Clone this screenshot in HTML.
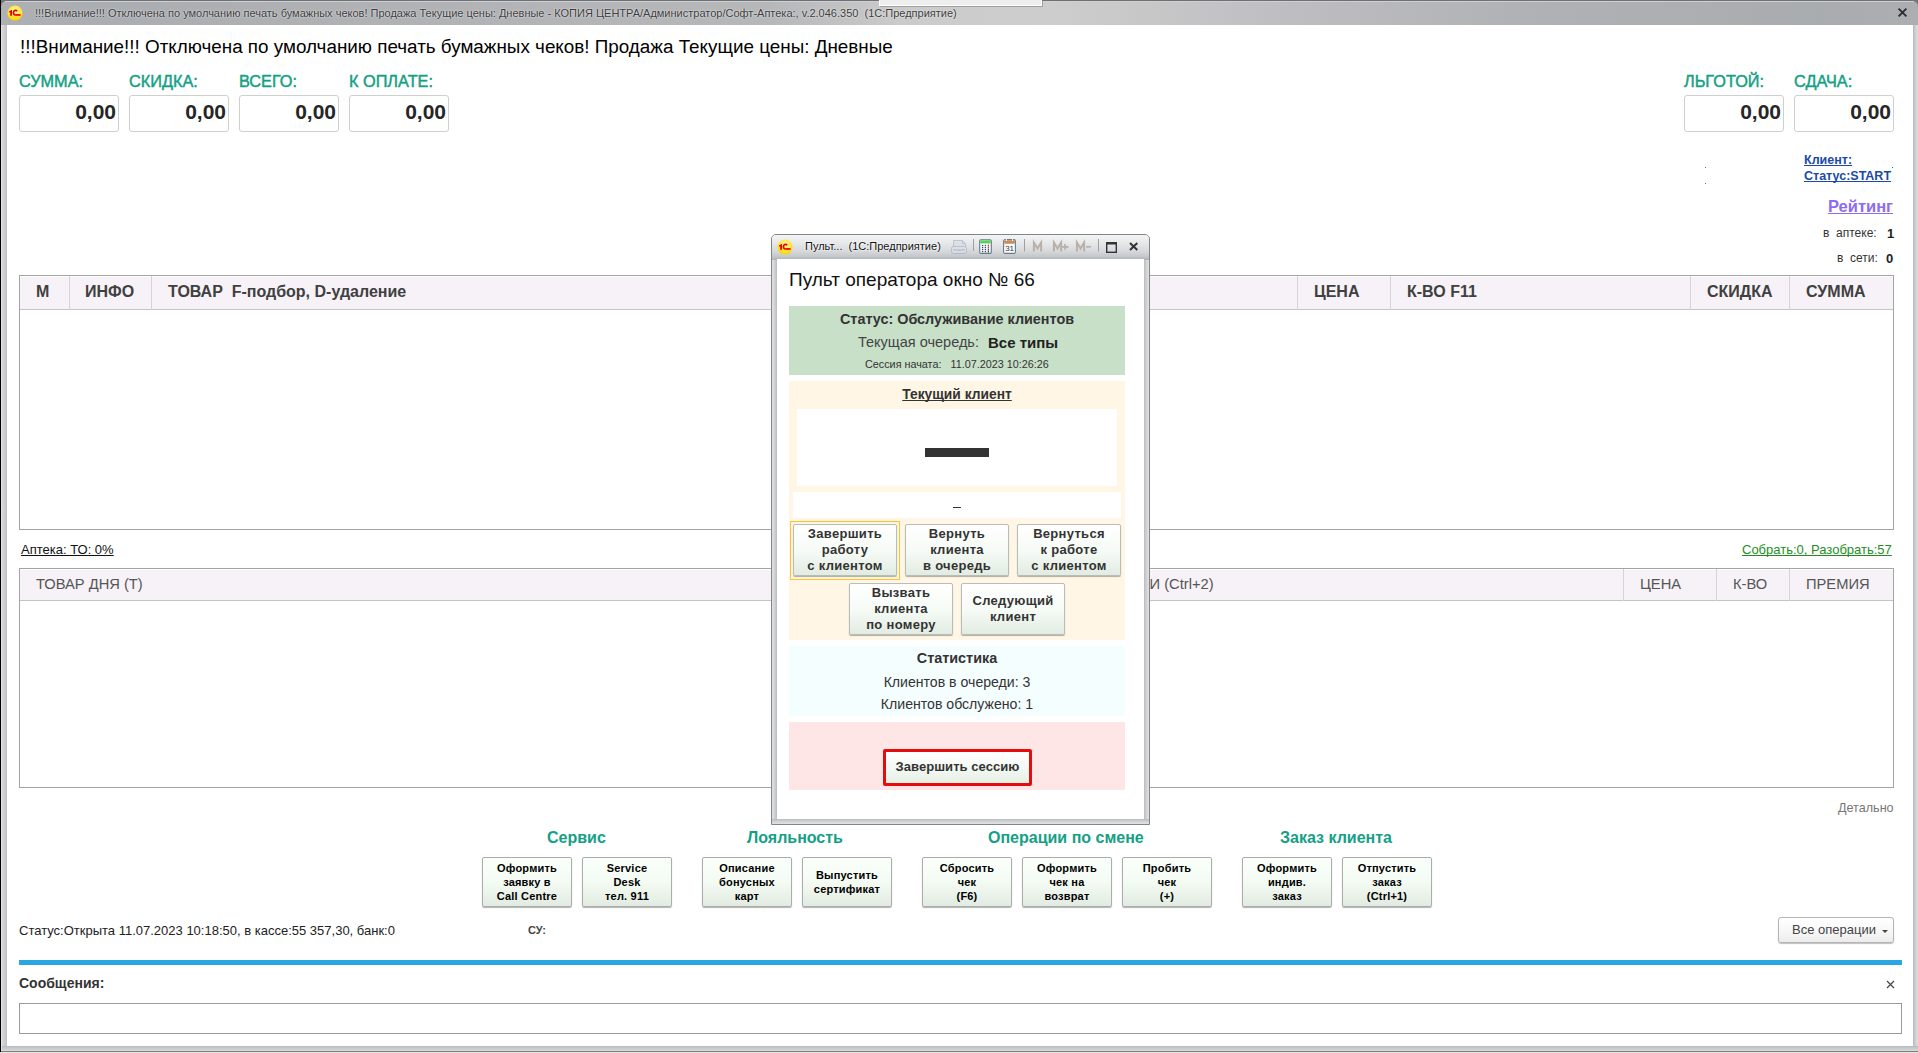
<!DOCTYPE html>
<html><head><meta charset="utf-8">
<style>
*{margin:0;padding:0;box-sizing:border-box}
html,body{width:1918px;height:1053px;overflow:hidden;background:#e8e6e0;font-family:"Liberation Sans",sans-serif}
.a{position:absolute;white-space:nowrap;text-decoration-skip-ink:none}
#frame{position:absolute;left:1px;top:0;width:1917px;height:1052px;background:#c5c8cc;border-bottom:1px solid #7e7e80}
#frame:after{content:"";position:absolute;left:0;top:0;width:1px;height:1051px;background:#e2e2e4}
#blk{position:absolute;left:0;top:0;width:1px;height:1052px;background:#000}
#tb{position:absolute;left:1px;top:0;width:1917px;height:25px;background:linear-gradient(90deg,#aeb0b4 0%,#aaadb1 5%,#b2b3b6 25%,#b6b7b9 40%,#cbcbcb 47%,#cdcdcd 55%,#bdbdc0 68%,#b0b1b4 80%,#a9acae 95%,#adaeb2 100%);border-top:1px solid #707072;border-radius:6px 6px 0 0}
#tb:before{content:"";position:absolute;left:4px;top:0;right:4px;height:1px;background:#cdd0d4}
#content{position:absolute;left:7px;top:25px;width:1906px;height:1021px;background:#fff}
.ttl{font-size:11px;color:#3c3c3c;text-shadow:0 0 2px #fff}
.h1{font-size:18.85px;color:#000}
.lbl{font-size:16.3px;color:#14a085;-webkit-text-stroke:.45px #14a085}
.num{position:absolute;width:100px;height:37px;border:1px solid #cfcfcf;border-radius:3px;background:#fff;font-size:21px;font-weight:bold;color:#262626;text-align:right;padding-right:2px;line-height:31px}
.th{position:absolute;top:0;height:34px;line-height:34px;font-size:16px;font-weight:bold;color:#333;border-right:1px solid #d8d8d8;background:#f5f2f5}
.th2{position:absolute;top:0;height:32px;line-height:32px;font-size:14px;color:#555;border-right:1px solid #d8d8d8;background:#f5f2f5}
.grp{font-size:16px;font-weight:bold;color:#14a085}
.btn{position:absolute;top:857px;width:90px;height:50px;border:1px solid #aaaeaa;border-radius:2px;background:linear-gradient(#fbfffb,#f3fbf3 50%,#e2ebe2);box-shadow:0 1px 1px rgba(0,0,0,.3);font-size:11px;font-weight:bold;color:#000;letter-spacing:.2px;text-align:center;line-height:14px;display:flex;align-items:center;justify-content:center}
.dbtn{position:absolute;width:104px;height:52px;border:1px solid #b9bcb9;border-radius:2px;background:linear-gradient(#ffffff,#f6fbf6 50%,#e2ece2);box-shadow:0 1px 1px rgba(0,0,0,.3);font-size:13px;font-weight:bold;color:#333;text-align:center;line-height:16px;display:flex;align-items:center;justify-content:center;letter-spacing:.3px}
.lnk{font-size:12.5px;font-weight:bold;color:#1b4aa6;text-decoration:underline}
.rat{font-size:16.5px;font-weight:bold;color:#8b6cf2;text-decoration:underline}
.sm{font-size:12px;color:#333}
.smb{font-size:13px;font-weight:bold;color:#222}
.hb{font-size:16px;font-weight:bold;color:#404040}
.hr{font-size:14.7px;color:#555}
.lk1{font-size:13px;color:#111;text-decoration:underline}
.lk2{font-size:13px;color:#1e8e1e;text-decoration:underline}
.det{font-size:12.6px;color:#777}
.st{font-size:13px;color:#222}
.su{font-size:11px;font-weight:bold;color:#444}
.ops{font-size:13px;color:#444}
.msg{font-size:14px;font-weight:bold;color:#333}
.mttl{font-size:11px;color:#111;text-shadow:0 0 2px #fff,0 0 2px #fff}
.mh{font-size:19px;color:#111}
.mb{font-size:14.4px;font-weight:bold;color:#333}
.mq{font-size:14.5px;color:#444}
.mqb{font-size:15px;font-weight:bold;color:#222}
.ms{font-size:10.8px;color:#333}
.mbu{font-size:13.8px;font-weight:bold;color:#333;text-decoration:underline}
.mst{font-size:14.1px;color:#333}
.mbtn{font-size:13px;font-weight:bold;color:#333;letter-spacing:.05px}
</style></head><body>
<div id="frame"></div>
<div id="blk"></div>
<div class="a" style="left:1px;top:0;width:8px;height:8px;background:#767678"></div>
<div class="a" style="left:1910px;top:0;width:8px;height:8px;background:#767678"></div>
<div id="tb"></div>
<div class="a" style="left:2px;top:25px;width:5px;height:1021px;background:linear-gradient(90deg,#d8d8dc,#cfd0d4 40%,#bcc0c4)"></div>
<div class="a" style="left:1913px;top:25px;width:5px;height:1021px;background:linear-gradient(90deg,#b4b8bc,#cdd0d4 50%,#d8d8dc 80%,#e0e0e2)"></div>
<div class="a" style="left:2px;top:1046px;width:1916px;height:5px;background:linear-gradient(#b4b8bc,#c6cacd 40%,#cdd0d3 75%,#e0e0e2)"></div>
<div id="content"></div>
<div class="a" style="left:879px;top:0;width:163px;height:6px;background:#eee;border:1px solid #fff;border-top:0;box-shadow:1px 1px 0 #a0a0a0"></div>

<!-- title -->
<svg class="a" style="left:7px;top:5px" width="16" height="16" viewBox="0 0 16 16">
<defs><radialGradient id="g1" cx="50%" cy="35%" r="60%"><stop offset="0" stop-color="#fffbb0"/><stop offset="1" stop-color="#ffd800"/></radialGradient></defs>
<circle cx="8" cy="8" r="7.6" fill="url(#g1)"/>
<path d="M1.9 6.6 L4.6 5 L5 5 L5 10.8 L3.2 10.8 L3.2 7.3 L2.3 7.8Z" fill="#e80000"/>
<path d="M10.2 6.1 A2.2 2.3 0 1 0 8.3 10" stroke="#e80000" stroke-width="1.7" fill="none"/>
<rect x="8.2" y="9.1" width="5.4" height="1.7" fill="#e80000"/>
</svg>
<div class="a ttl" style="left:35px;top:7px">!!!Внимание!!! Отключена по умолчанию печать бумажных чеков! Продажа Текущие цены: Дневные - КОПИЯ ЦЕНТРА/Администратор/Софт-Аптека:, v.2.046.350&nbsp; (1С:Предприятие)</div>
<svg class="a" style="left:1897px;top:7px" width="11" height="11" viewBox="0 0 11 11"><path d="M1.6 1.6L9.4 9.4M9.4 1.6L1.6 9.4" stroke="#2e2e2e" stroke-width="1.9"/></svg>

<!-- heading -->
<div class="a h1" style="left:20px;top:36px">!!!Внимание!!! Отключена по умолчанию печать бумажных чеков! Продажа Текущие цены: Дневные</div>

<div class="a lbl" style="left:19px;top:72px">СУММА:</div>
<div class="a lbl" style="left:129px;top:72px">СКИДКА:</div>
<div class="a lbl" style="left:239px;top:72px">ВСЕГО:</div>
<div class="a lbl" style="left:349px;top:72px">К ОПЛАТЕ:</div>
<div class="a lbl" style="left:1684px;top:72px">ЛЬГОТОЙ:</div>
<div class="a lbl" style="left:1794px;top:72px">СДАЧА:</div>
<div class="num" style="left:19px;top:95px">0,00</div>
<div class="num" style="left:129px;top:95px">0,00</div>
<div class="num" style="left:239px;top:95px">0,00</div>
<div class="num" style="left:349px;top:95px">0,00</div>
<div class="num" style="left:1684px;top:95px">0,00</div>
<div class="num" style="left:1794px;top:95px">0,00</div>


<!-- right client -->
<div class="a lnk" style="left:1804px;top:153px">Клиент:</div>
<div class="a lnk" style="left:1804px;top:169px">Статус:START</div>
<div class="a" style="left:1705px;top:167px;width:1px;height:1px;background:#5577aa"></div>
<div class="a" style="left:1705px;top:183px;width:1px;height:1px;background:#5577aa"></div>
<div class="a" style="left:1892px;top:167px;width:1px;height:1px;background:#3060b0"></div>
<div class="a rat" style="left:1828px;top:197px">Рейтинг</div>
<div class="a sm" style="left:1823px;top:226px">в&nbsp; аптеке:</div>
<div class="a smb" style="left:1887px;top:226px">1</div>
<div class="a sm" style="left:1837px;top:251px">в&nbsp; сети:</div>
<div class="a smb" style="left:1886px;top:251px">0</div>

<!-- table 1 -->
<div class="a" style="left:19px;top:275px;width:1875px;height:255px;border:1px solid #a4a4a4;background:#fff">
 <div class="a" style="left:0;top:0;width:1873px;height:34px;background:#f7f2f7;border-top:1px solid #fff;border-bottom:1px solid #c4c4c4"></div>
 <div class="a" style="left:49px;top:0;width:1px;height:34px;background:#d4d4d4"></div>
 <div class="a" style="left:131px;top:0;width:1px;height:34px;background:#d4d4d4"></div>
 <div class="a" style="left:1277px;top:0;width:1px;height:34px;background:#d4d4d4"></div>
 <div class="a" style="left:1370px;top:0;width:1px;height:34px;background:#d4d4d4"></div>
 <div class="a" style="left:1670px;top:0;width:1px;height:34px;background:#d4d4d4"></div>
 <div class="a" style="left:1769px;top:0;width:1px;height:34px;background:#d4d4d4"></div>
</div>
<div class="a hb" style="left:36px;top:283px">М</div>
<div class="a hb" style="left:85px;top:283px">ИНФО</div>
<div class="a hb" style="left:168px;top:283px">ТОВАР&nbsp; F-подбор, D-удаление</div>
<div class="a hb" style="left:1314px;top:283px">ЦЕНА</div>
<div class="a hb" style="left:1407px;top:283px">К-ВО F11</div>
<div class="a hb" style="left:1707px;top:283px">СКИДКА</div>
<div class="a hb" style="left:1806px;top:283px">СУММА</div>

<div class="a lk1" style="left:21px;top:542px">Аптека: ТО: 0%</div>
<div class="a lk2" style="left:1742px;top:542px">Собрать:0, Разобрать:57</div>

<!-- table 2 -->
<div class="a" style="left:19px;top:568px;width:1875px;height:220px;border:1px solid #a4a4a4;background:#fff">
 <div class="a" style="left:0;top:0;width:1873px;height:32px;background:#f7f2f7;border-top:1px solid #fff;border-bottom:1px solid #c4c4c4"></div>
 <div class="a" style="left:1603px;top:0;width:1px;height:32px;background:#d4d4d4"></div>
 <div class="a" style="left:1696px;top:0;width:1px;height:32px;background:#d4d4d4"></div>
 <div class="a" style="left:1769px;top:0;width:1px;height:32px;background:#d4d4d4"></div>
</div>
<div class="a hr" style="left:36px;top:576px">ТОВАР ДНЯ (Т)</div>
<div class="a hr" style="left:1141px;top:576px">КИ (Ctrl+2)</div>
<div class="a hr" style="left:1640px;top:576px">ЦЕНА</div>
<div class="a hr" style="left:1733px;top:576px">К-ВО</div>
<div class="a hr" style="left:1806px;top:576px">ПРЕМИЯ</div>

<div class="a det" style="left:1838px;top:801px">Детально</div>

<!-- groups -->
<div class="a grp" style="left:547px;top:829px">Сервис</div>
<div class="a grp" style="left:747px;top:829px">Лояльность</div>
<div class="a grp" style="left:988px;top:829px">Операции по смене</div>
<div class="a grp" style="left:1280px;top:829px">Заказ клиента</div>

<div class="btn" style="left:482px">Оформить<br>заявку в<br>Call Centre</div>
<div class="btn" style="left:582px">Service<br>Desk<br>тел. 911</div>
<div class="btn" style="left:702px">Описание<br>бонусных<br>карт</div>
<div class="btn" style="left:802px">Выпустить<br>сертификат</div>
<div class="btn" style="left:922px">Сбросить<br>чек<br>(F6)</div>
<div class="btn" style="left:1022px">Оформить<br>чек на<br>возврат</div>
<div class="btn" style="left:1122px">Пробить<br>чек<br>(+)</div>
<div class="btn" style="left:1242px">Оформить<br>индив.<br>заказ</div>
<div class="btn" style="left:1342px">Отпустить<br>заказ<br>(Ctrl+1)</div>

<div class="a st" style="left:19px;top:923px">Статус:Открыта 11.07.2023 10:18:50, в кассе:55 357,30, банк:0</div>
<div class="a su" style="left:528px;top:924px">СУ:</div>

<div class="a" style="left:1778px;top:917px;width:116px;height:26px;border:1px solid #b4b4b4;border-radius:3px;background:linear-gradient(#fff,#f6f6f6 60%,#ececec);box-shadow:0 1px 1px rgba(0,0,0,.25)"></div>
<div class="a ops" style="left:1792px;top:922px">Все операции</div>
<div class="a" style="left:1882px;top:930px;width:0;height:0;border-left:3px solid transparent;border-right:3px solid transparent;border-top:3px solid #444"></div>

<div class="a" style="left:19px;top:960px;width:1883px;height:5px;background:#29a7e1"></div>
<div class="a msg" style="left:19px;top:975px">Сообщения:</div>
<svg class="a" style="left:1886px;top:980px" width="9" height="9" viewBox="0 0 9 9"><path d="M1 1L8 8M8 1L1 8" stroke="#444" stroke-width="1.2"/></svg>
<div class="a" style="left:19px;top:1003px;width:1883px;height:31px;border:1px solid #9a9a9a;background:#fff"></div>


<!-- modal -->
<div id="modal" class="a" style="left:771px;top:234px;width:379px;height:591px;border:1px solid #858585;border-radius:5px 5px 0 0;background:#c8cbce">
 <div class="a" style="left:0;top:0;width:377px;height:25px;border-radius:4px 4px 0 0;background:linear-gradient(#f3f4f6,#e8e9eb 30%,#d6d8db 65%,#c6c9cc 85%,#aeb1b5)"></div>
 <div class="a" style="left:0;top:25px;width:5px;height:564px;background:linear-gradient(90deg,#e2e2e4,#d0d2d4 50%,#b9bcbf)"></div>
 <div class="a" style="left:372px;top:25px;width:5px;height:564px;background:linear-gradient(90deg,#b9bcbf,#d0d2d4 50%,#e2e2e4)"></div>
 <div class="a" style="left:0;top:584px;width:377px;height:5px;background:linear-gradient(#b9bcbf,#d0d2d4 50%,#e2e2e4)"></div>
 <div class="a" style="left:5px;top:24px;width:367px;height:560px;background:#fff"></div>
</div>
<svg class="a" style="left:777px;top:239px" width="16" height="16" viewBox="0 0 16 16">
<defs><radialGradient id="g2" cx="50%" cy="35%" r="60%"><stop offset="0" stop-color="#fffbb0"/><stop offset="1" stop-color="#ffd800"/></radialGradient></defs>
<circle cx="8" cy="8" r="7.6" fill="url(#g2)"/>
<path d="M1.9 6.6 L4.6 5 L5 5 L5 10.8 L3.2 10.8 L3.2 7.3 L2.3 7.8Z" fill="#e80000"/>
<path d="M10.2 6.1 A2.2 2.3 0 1 0 8.3 10" stroke="#e80000" stroke-width="1.7" fill="none"/>
<rect x="8.2" y="9.1" width="5.4" height="1.7" fill="#e80000"/>
</svg>
<div class="a mttl" style="left:805px;top:240px">Пульт...&nbsp; (1С:Предприятие)</div>
<!-- toolbar icons -->
<svg class="a" style="left:950px;top:239px" width="200" height="18" viewBox="0 0 200 18">
 <g opacity="0.5">
 <path d="M3.5 1.5H12.5L15.5 4.5V8H3.5Z" fill="#d8d8dc" stroke="#8fa3c0"/>
 <path d="M12.5 1.5V4.5H15.5" fill="none" stroke="#8fa3c0"/>
 <rect x="1.5" y="7.5" width="15" height="7" rx="2" fill="#dde2ea" stroke="#8fa3c0"/>
 <rect x="3.5" y="10" width="3" height="1.5" fill="#8fa3c0"/><rect x="11.5" y="10" width="3" height="1.5" fill="#8fa3c0"/><rect x="7" y="10.5" width="4" height="1.5" fill="#8fa3c0"/>
 </g>
 <rect x="23" y="-2" width="1" height="14" fill="#a0a0a0"/>
 <rect x="29.7" y="0.8" width="11.6" height="13.6" rx="1.2" fill="#f4f7fa" stroke="#68788a" stroke-width="1.1"/>
 <rect x="30.3" y="1.4" width="10.4" height="3" fill="#50d455"/>
 <g fill="#3c4650"><rect x="32" y="6" width="1.2" height="1.2"/><rect x="34.8" y="6" width="1.2" height="1.2"/><rect x="32" y="8" width="1.2" height="1.2"/><rect x="34.8" y="8" width="1.2" height="1.2"/><rect x="37.8" y="8.2" width="1.2" height="1.2"/><rect x="32" y="10" width="1.2" height="1.2"/><rect x="34.8" y="10" width="1.2" height="1.2"/><rect x="37.8" y="10" width="1.2" height="1.2"/><rect x="32" y="12" width="1.2" height="1.2"/><rect x="34.8" y="12" width="1.2" height="1.2"/><rect x="37.8" y="11.5" width="1.2" height="2"/></g>
 <rect x="37.8" y="5.6" width="1.2" height="2" fill="#f03030"/>
 <rect x="53.6" y="0.6" width="11.8" height="13.8" rx="1.5" fill="#fafcff" stroke="#6c7a88" stroke-width="1.1"/>
 <rect x="54.2" y="1.2" width="10.6" height="3.6" rx="1" fill="#c88a58"/>
 <rect x="55.9" y="0" width="0.9" height="2" fill="#fff"/><rect x="62" y="0" width="0.9" height="2" fill="#fff"/>
 <text x="59.6" y="12" font-size="8" text-anchor="middle" fill="#303030" font-family="Liberation Sans">31</text>
 <rect x="74" y="-2" width="1" height="14.5" fill="#a0a0a0"/>
 <g stroke="#b9b0a8" stroke-width="2" fill="none" stroke-linejoin="miter">
  <path d="M83.9 12.6V3.6L87.5 9.5L91.1 3.6V12.6"/>
  <path d="M103.9 12.6V3.6L107.5 9.5L111.1 3.6V12.6"/>
  <path d="M111.5 7.8H118.5M115 5V10.8" stroke-width="1.7"/>
  <path d="M126.9 12.6V3.6L130.5 9.5L134.1 3.6V12.6"/>
  <path d="M136 7.8H141" stroke-width="1.6"/>
 </g>
 <rect x="148" y="-2" width="1" height="14.5" fill="#a0a0a0"/>
 <rect x="156.7" y="3.8" width="9.6" height="9.5" fill="none" stroke="#333" stroke-width="1.4"/>
 <rect x="156" y="3.1" width="11" height="2.4" fill="#333"/>
 <path d="M180 4L187.3 11M187.3 4L180 11" stroke="#333" stroke-width="2"/>
</svg>

<div class="a mh" style="left:789px;top:269px">Пульт оператора окно № 66</div>
<div class="a" style="left:789px;top:306px;width:336px;height:69px;background:#c8e0c8"></div>
<div class="a mb" style="left:789px;top:311px;width:336px;text-align:center">Статус: Обслуживание клиентов</div>
<div class="a mq" style="left:858px;top:334px">Текущая очередь:</div>
<div class="a mqb" style="left:988px;top:334px">Все типы</div>
<div class="a ms" style="left:865px;top:358px">Сессия начата:&nbsp;&nbsp; 11.07.2023 10:26:26</div>

<div class="a" style="left:789px;top:381px;width:336px;height:259px;background:#fff6e6"></div>
<div class="a mbu" style="left:789px;top:387px;width:336px;text-align:center">Текущий клиент</div>
<div class="a" style="left:797px;top:409px;width:320px;height:77px;background:#fff"></div>
<div class="a" style="left:925px;top:448px;width:64px;height:9px;background:#333"></div>
<div class="a" style="left:793px;top:492px;width:328px;height:26px;background:#fff"></div>
<div class="a" style="left:953px;top:507px;width:8px;height:1px;background:#333"></div>

<div class="a" style="left:790px;top:521px;width:110px;height:59px;border:1px solid #fbc525"></div>
<div class="dbtn" style="left:793px;top:524px">Завершить<br>работу<br>с клиентом</div>
<div class="dbtn" style="left:905px;top:524px">Вернуть<br>клиента<br>в очередь</div>
<div class="dbtn" style="left:1017px;top:524px">Вернуться<br>к работе<br>с клиентом</div>
<div class="dbtn" style="left:849px;top:583px">Вызвать<br>клиента<br>по номеру</div>
<div class="dbtn" style="left:961px;top:583px">Следующий<br>клиент</div>

<div class="a" style="left:789px;top:646px;width:336px;height:70px;background:#f5feff"></div>
<div class="a mb" style="left:789px;top:650px;width:336px;text-align:center">Статистика</div>
<div class="a mst" style="left:789px;top:674px;width:336px;text-align:center">Клиентов в очереди: 3</div>
<div class="a mst" style="left:789px;top:696px;width:336px;text-align:center">Клиентов обслужено: 1</div>

<div class="a" style="left:789px;top:722px;width:336px;height:68px;background:#ffe6e6"></div>
<div class="a" style="left:883px;top:749px;width:149px;height:37px;border:3px solid #e40c0c;border-radius:2px;background:linear-gradient(#fff,#f2f8f2 55%,#e6efe6)"></div>
<div class="a mbtn" style="left:883px;top:759px;width:149px;text-align:center">Завершить сессию</div>

</body></html>
